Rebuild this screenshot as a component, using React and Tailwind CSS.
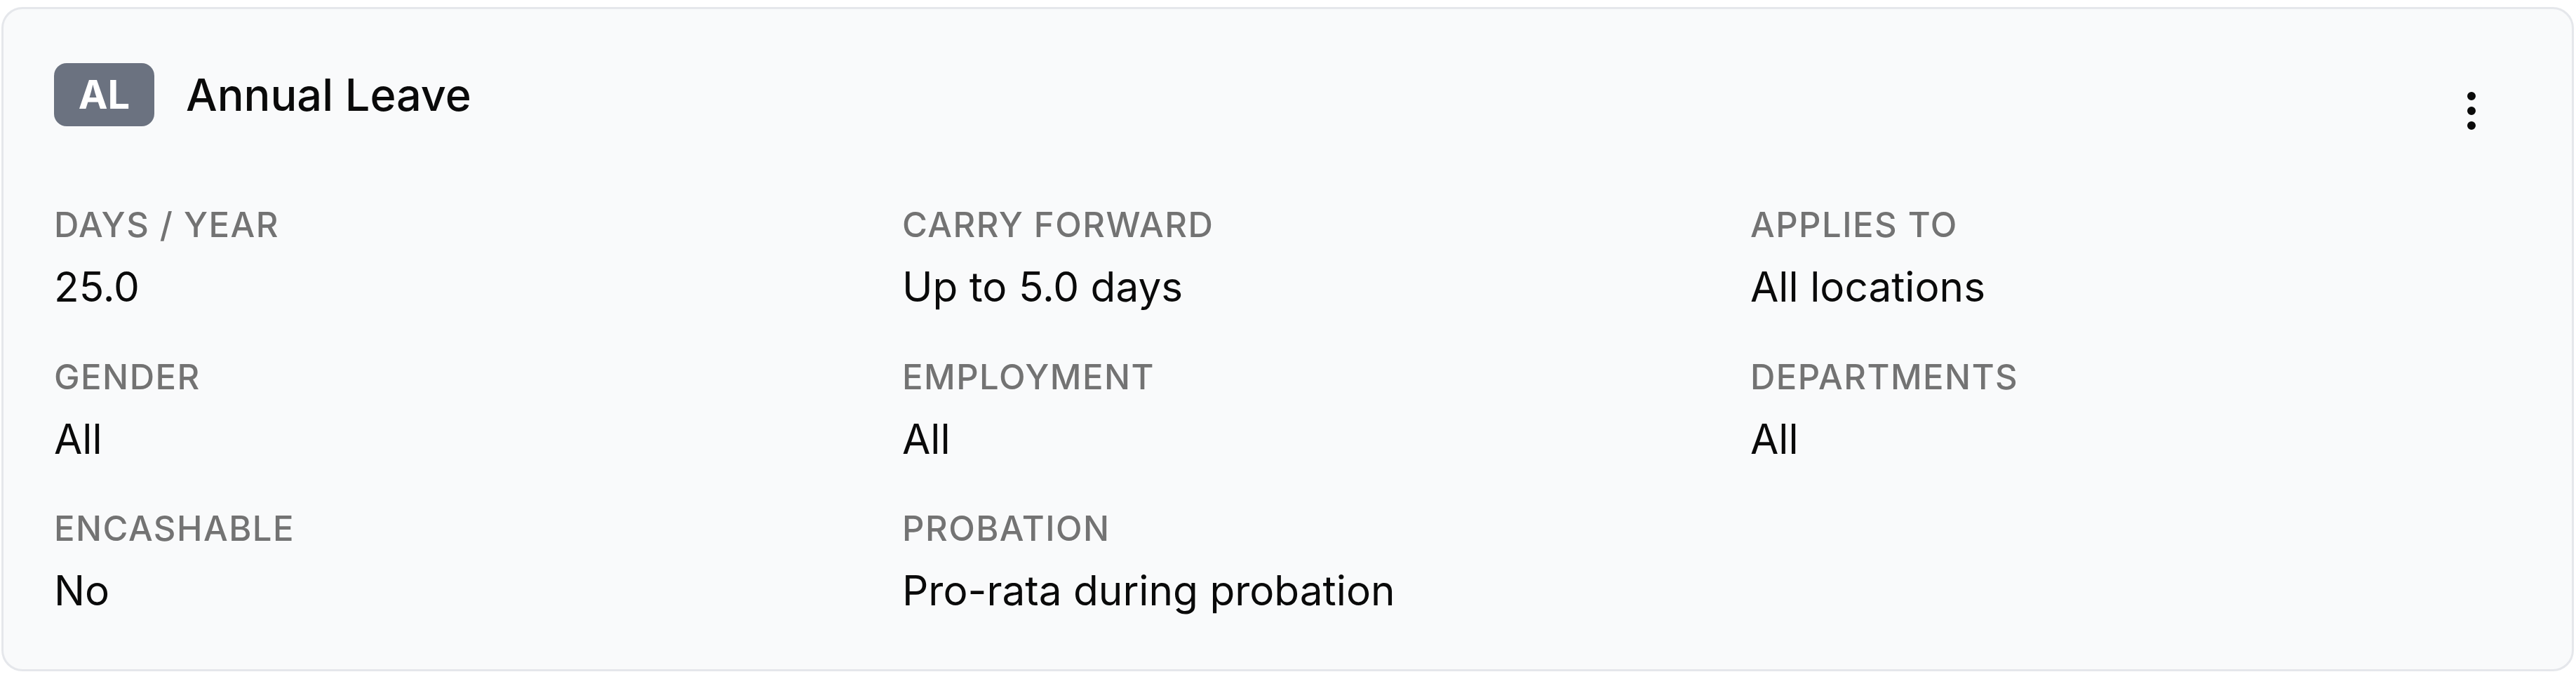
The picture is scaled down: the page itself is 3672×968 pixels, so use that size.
import React from "react";

const items = [
  ["DAYS / YEAR", "25.0"],
  ["CARRY FORWARD", "Up to 5.0 days"],
  ["APPLIES TO", "All locations"],
  ["GENDER", "All"],
  ["EMPLOYMENT", "All"],
  ["DEPARTMENTS", "All"],
  ["ENCASHABLE", "No"],
  ["PROBATION", "Pro-rata during probation"],
];

function Dots() {
  return (
    <svg width="72" height="72" viewBox="0 0 24 24" fill="none" stroke="#0a0a0a" strokeWidth="2" strokeLinecap="round" strokeLinejoin="round">
      <circle cx="12" cy="12" r="1" />
      <circle cx="12" cy="5" r="1" />
      <circle cx="12" cy="19" r="1" />
    </svg>
  );
}

export default function App() {
  return (
    <div className="min-h-screen bg-white pt-[10px] pl-[2px] pr-[3px]" style={{ fontFamily: "Inter, 'Noto Sans', sans-serif" }}>
      <div className="rounded-[30px] border-[3px] border-[#e5e7eb] bg-[#f9fafb] pt-[77px] pb-[82px] pl-[72px] pr-[75px]">
        <div className="flex items-start justify-between">
          <div className="flex items-center gap-[45px]">
            <div className="flex h-[90px] w-[143px] items-center justify-center rounded-[18px] bg-[#6b7280] text-[56px] font-bold leading-none text-white">
              AL
            </div>
            <div className="text-[63px] font-medium leading-none text-[#0a0a0a]">Annual Leave</div>
          </div>
          <button className="flex h-[136px] w-[136px] items-center justify-center rounded-[18px]">
            <Dots />
          </button>
        </div>
        <div className="mt-[70px] grid grid-cols-3 gap-x-[113px] gap-y-[74px]">
          {items.map(([label, value]) => (
            <div key={label} className="flex flex-col">
              <div className="text-[49px] font-medium leading-none tracking-[0.03em] text-[#737373]">{label}</div>
              <div className="mt-[35px] text-[58.5px] leading-none text-[#0a0a0a]">{value}</div>
            </div>
          ))}
        </div>
      </div>
    </div>
  );
}
